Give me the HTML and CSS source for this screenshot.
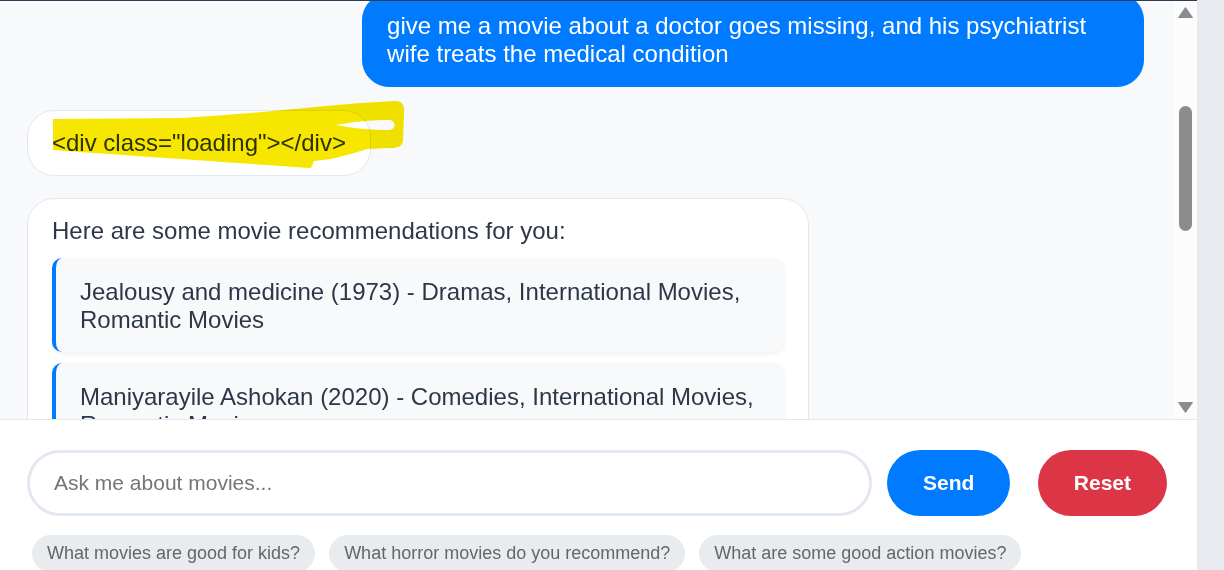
FILE: index.html
```html
<!DOCTYPE html>
<html lang="en">
<head>
<meta charset="utf-8">
<title>Movie Chat</title>
<link rel="stylesheet" href="styles.css">
</head>
<body>
<div class="app">
  <div class="chat">
    <div class="messages">
      <div class="msg user first">give me a movie about a doctor goes missing, and his psychiatrist wife treats the medical condition</div>
      <div class="msg bot loading-msg">&lt;div class="loading"&gt;&lt;/div&gt;
        <svg class="highlight" viewBox="47 96 360 76" width="360" height="76" aria-hidden="true">
          <path fill="#f7e600" fill-rule="evenodd" d="M52,118 L180,117 C240,114 300,107 360,102 L394,100 C401,100 404,104 403,112 L402,140 C401,145 397,147 390,147 L366,148 L350,153 L330,158 L313,160 L310,167 C250,163 150,156 52,149 Z M335,124 C350,121 372,119 389,119 C395,120 395,128 389,129 C370,129 350,127 335,124 Z"/>
        </svg>
      </div>
      <div class="msg bot">
        <p class="intro">Here are some movie recommendations for you:</p>
        <div class="card">Jealousy and medicine (1973) - Dramas, International Movies, Romantic Movies</div>
        <div class="card">Maniyarayile Ashokan (2020) - Comedies, International Movies, Romantic Movies</div>
      </div>
    </div>
    <div class="scrollbar">
      <svg class="arrow" viewBox="0 0 15 11" width="15" height="11"><path d="M7.5,0.5 L14.5,10.5 L0.5,10.5 Z" fill="#8c8c8c" stroke="#8c8c8c" stroke-linejoin="round"/></svg>
      <div class="thumb"></div>
      <div class="spacer"></div>
      <svg class="arrow" viewBox="0 0 15 11" width="15" height="11"><path d="M0.5,0.5 L14.5,0.5 L7.5,10.5 Z" fill="#8c8c8c" stroke="#8c8c8c" stroke-linejoin="round"/></svg>
    </div>
  </div>
  <div class="composer">
    <div class="input-row">
      <input class="input" type="text" placeholder="Ask me about movies...">
      <button class="btn send">Send</button>
      <button class="btn reset">Reset</button>
    </div>
    <div class="chips">
      <span class="chip">What movies are good for kids?</span>
      <span class="chip">What horror movies do you recommend?</span>
      <span class="chip">What are some good action movies?</span>
    </div>
  </div>
</div>
</body>
</html>
```
FILE: styles.css
```css
html, body {
  margin: 0;
  padding: 0;
  height: 100%;
  overflow: hidden;
}
body {
  background: #e8eaef;
  font-family: "Liberation Sans", Arial, sans-serif;
}
.app {
  width: 1197px;
  height: 570px;
  background: #ffffff;
  border-top: 1px solid #2c3e50;
  box-sizing: border-box;
  display: flex;
  flex-direction: column;
  overflow: hidden;
}
.chat {
  height: 418px;
  flex: none;
  display: flex;
  background: #f8f9fa;
  border-bottom: 1px solid #e2e8f0;
}
.messages {
  flex: 1;
  overflow: hidden;
  padding: 0 30px 0 27px;
  display: flex;
  flex-direction: column;
  gap: 22.5px;
  align-items: flex-start;
}
.msg {
  max-width: 70%;
  box-sizing: border-box;
  font-size: 24px;
  line-height: 28px;
  padding: 18px 24px;
  border-radius: 27px;
  border: 1px solid #e2e8f0;
  color: #2d3748;
  flex: none;
}
.msg.user {
  align-self: flex-end;
  background: #007bff;
  border-color: #007bff;
  color: #ffffff;
}
.msg.first {
  margin-top: -8px;
}
.msg.bot {
  background: #ffffff;
}
.loading-msg {
  position: relative;
}
.highlight {
  position: absolute;
  left: 20px;
  top: -14px;
  mix-blend-mode: multiply;
  pointer-events: none;
}
.intro {
  margin: 0 0 13px;
}
.card {
  background: #f8f9fa;
  border-left: 4px solid #007bff;
  border-radius: 10px;
  padding: 20px 24px 18px;
  box-shadow: 0 2px 5px rgba(0, 0, 0, 0.06);
  margin-bottom: 11px;
}
.scrollbar {
  width: 23px;
  flex: none;
  background: #fcfcfc;
  display: flex;
  flex-direction: column;
  align-items: center;
  padding: 6px 0 6px;
  box-sizing: border-box;
}
.arrow {
  display: block;
  flex: none;
}
.thumb {
  width: 13px;
  height: 125px;
  margin-top: 88px;
  border-radius: 7px;
  background: #8c8c8c;
  flex: none;
}
.spacer {
  flex: 1;
}
.composer {
  flex: 1;
  padding: 30px 30px 0 27px;
}
.input-row {
  display: flex;
  align-items: center;
}
.input {
  flex: 1;
  min-width: 0;
  height: 66px;
  box-sizing: border-box;
  border: 3px solid #e2e8f0;
  border-radius: 33px;
  padding: 0 24px;
  font-family: "Liberation Sans", Arial, sans-serif;
  font-size: 21px;
  color: #2d3748;
  outline: none;
  background: #ffffff;
}
.input::placeholder {
  color: #757575;
}
.btn {
  height: 66px;
  border: none;
  border-radius: 33px;
  font-family: "Liberation Sans", Arial, sans-serif;
  font-weight: bold;
  font-size: 21px;
  color: #ffffff;
  flex: none;
}
.send {
  background: #007bff;
  margin-left: 15px;
  padding: 0 35.5px;
}
.reset {
  background: #dc3545;
  margin-left: 28px;
  padding: 0 36px;
}
.chips {
  display: flex;
  gap: 14px;
  margin-top: 19px;
  padding-left: 5px;
}
.chip {
  background: #e9ecef;
  color: #666666;
  font-size: 18px;
  padding: 8px 15px;
  border-radius: 20px;
  white-space: nowrap;
}
```
